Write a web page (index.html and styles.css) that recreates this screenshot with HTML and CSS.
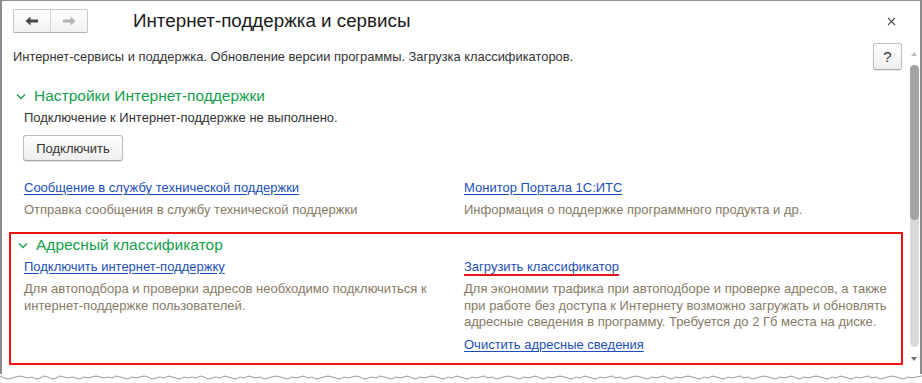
FILE: index.html
```html
<!DOCTYPE html>
<html lang="ru">
<head>
<meta charset="utf-8">
<title>Интернет-поддержка и сервисы</title>
<link rel="stylesheet" href="styles.css">
</head>
<body>
<div class="window">
  <div class="header">
    <div class="nav">
      <button class="nav-btn back" aria-label="Назад">
        <svg width="14" height="10" viewBox="0 0 14 10"><path d="M0.5 5 L5.5 0.5 L5.5 3.5 L13 3.5 L13 6.5 L5.5 6.5 L5.5 9.5 Z" fill="#4a4a4a"/></svg>
      </button>
      <button class="nav-btn fwd" aria-label="Вперёд">
        <svg width="14" height="10" viewBox="0 0 14 10"><path d="M13.5 5 L8.5 0.5 L8.5 3.5 L1 3.5 L1 6.5 L8.5 6.5 L8.5 9.5 Z" fill="#b4b4b4"/></svg>
      </button>
    </div>
    <h1 class="title">Интернет-поддержка и сервисы</h1>
    <button class="close" aria-label="Закрыть">
      <svg width="9" height="9" viewBox="0 0 9 9"><path d="M1 1 L8 8 M8 1 L1 8" stroke="#505050" stroke-width="1.1"/></svg>
    </button>
  </div>
  <div class="body">
    <div class="main">
      <div class="desc-row">
        <p class="intro">Интернет-сервисы и поддержка. Обновление версии программы. Загрузка классификаторов.</p>
        <button class="help">?</button>
      </div>

      <section class="group">
        <div class="group-title">
          <svg class="chev" width="10" height="7" viewBox="0 0 10 7"><path d="M1 1.5 L5 5.5 L9 1.5" fill="none" stroke="#13a04d" stroke-width="1.3"/></svg>
          <span>Настройки Интернет-поддержки</span>
        </div>
        <div class="group-body">
          <p class="text">Подключение к Интернет-поддержке не выполнено.</p>
          <button class="btn">Подключить</button>
          <div class="cols first-cols">
            <div class="col">
              <a class="link" href="#">Сообщение в службу технической поддержки</a>
              <p class="note">Отправка сообщения в службу технической поддержки</p>
            </div>
            <div class="col">
              <a class="link" href="#">Монитор Портала 1С:ИТС</a>
              <p class="note">Информация о поддержке программного продукта и др.</p>
            </div>
          </div>
        </div>
      </section>

      <section class="group boxed">
        <div class="group-title">
          <svg class="chev" width="10" height="7" viewBox="0 0 10 7"><path d="M1 1.5 L5 5.5 L9 1.5" fill="none" stroke="#13a04d" stroke-width="1.3"/></svg>
          <span>Адресный классификатор</span>
        </div>
        <div class="group-body">
          <div class="cols">
            <div class="col">
              <a class="link" href="#">Подключить интернет-поддержку</a>
              <p class="note multi">Для автоподбора и проверки адресов необходимо подключиться к интернет-поддержке пользователей.</p>
            </div>
            <div class="col">
              <a class="link marked" href="#">Загрузить классификатор</a>
              <p class="note multi">Для экономии трафика при автоподборе и проверке адресов, а также при работе без доступа к Интернету возможно загружать и обновлять адресные сведения в программу. Требуется до 2 Гб места на диске.</p>
              <a class="link last" href="#">Очистить адресные сведения</a>
            </div>
          </div>
        </div>
      </section>
    </div>
    <div class="scroll">
      <div class="arrow up"></div>
      <div class="track"><div class="thumb"></div></div>
      <div class="arrow down"></div>
    </div>
  </div>
</div>
<svg class="torn" width="922" height="10" viewBox="0 0 922 10"><polyline fill="none" stroke="#9a9a9a" stroke-width="1" points="0,3 4,5 8,6 12,5 16,4 20,3 24,4 28,5 32,4 36,6 40,5 44,3 48,4 52,6 56,5 60,3 64,4 68,5 72,4 76,5 80,6 84,4 88,5 92,4 96,3 100,4 104,5 108,4 112,5 116,3 120,4 124,5 128,6 132,4 136,5 140,4 144,3 148,4 152,6 156,5 160,4 164,5 168,3 172,4 176,5 180,6 184,4 188,5 192,4 196,5 200,3 204,4 208,6 212,5 216,4 220,5 224,3 228,4 232,5 236,6 240,4 244,5 248,3 252,4 256,5 260,4 264,6 268,5 272,4 276,3 280,4 284,5 288,6 292,4 296,5 300,4 304,3 308,5 312,4 316,6 320,5 324,4 328,3 332,4 336,5 340,6 344,4 348,5 352,4 356,3 360,4 364,6 368,5 372,4 376,5 380,3 384,4 388,5 392,6 396,4 400,5 404,4 408,3 412,5 416,6 420,4 424,5 428,4 432,3 436,4 440,5 444,6 448,4 452,5 456,3 460,4 464,5 468,6 472,4 476,5 480,4 484,3 488,5 492,4 496,6 500,5 504,4 508,3 512,4 516,5 520,6 524,4 528,5 532,4 536,3 540,5 544,6 548,4 552,5 556,4 560,3 564,4 568,5 572,6 576,4 580,5 584,3 588,4 592,5 596,6 600,4 604,5 608,4 612,3 616,5 620,4 624,6 628,5 632,4 636,3 640,4 644,5 648,6 652,4 656,5 660,4 664,3 668,5 672,6 676,4 680,5 684,4 688,3 692,4 696,5 700,6 704,4 708,5 712,3 716,4 720,5 724,6 728,4 732,5 736,4 740,3 744,5 748,4 752,6 756,5 760,4 764,3 768,4 772,5 776,6 780,4 784,5 788,4 792,3 796,5 800,6 804,4 808,5 812,4 816,3 820,4 824,5 828,6 832,4 836,5 840,3 844,4 848,5 852,6 856,4 860,5 864,4 868,3 872,5 876,4 880,6 884,5 888,4 892,3 896,4 900,5 904,6 908,4 912,5 916,4 922,3"/></svg>
</body>
</html>
```

FILE: styles.css
```css
* { box-sizing: border-box; }
html, body { margin: 0; padding: 0; background: #fff; }
body {
  font-family: Arial, "Liberation Sans", sans-serif;
  font-size: 13px;
  color: #333;
  width: 922px;
  height: 383px;
  overflow: hidden;
}
p { margin: 0; }
button { font-family: inherit; cursor: pointer; }

.window {
  width: 922px;
  height: 374px;
  border-top: 1px solid #8c8c8c;
  border-left: 2px solid #8c8c8c;
  border-right: 2px solid #8c8c8c;
  display: flex;
  flex-direction: column;
}

.header {
  height: 40px;
  display: flex;
  align-items: center;
  padding: 0 0 0 11px;
}
.nav {
  display: flex;
  height: 24px;
  border: 1px solid #c9c9c9;
  border-bottom-color: #b0b0b0;
  border-radius: 2px;
  background: linear-gradient(#ffffff, #f1f1f1);
}
.nav-btn {
  width: 36px;
  height: 22px;
  border: 0;
  padding: 0;
  background: transparent;
  display: flex;
  align-items: center;
  justify-content: center;
}
.nav-btn.back { border-right: 1px solid #d6d6d6; width: 37px; }
.title {
  margin: 0 0 0 45px;
  font-size: 18.8px;
  font-weight: normal;
  color: #1a1a1a;
  flex: 1;
}
.close {
  width: 20px;
  height: 20px;
  border: 0;
  background: transparent;
  padding: 0;
  margin-right: 19px;
  display: flex;
  align-items: center;
  justify-content: center;
}

.body {
  flex: 1;
  display: flex;
  margin-top: 2px;
}
.main {
  flex: 1;
  padding: 0 2px 0 11px;
}
.desc-row {
  display: flex;
  align-items: center;
  justify-content: space-between;
  height: 27px;
}
.intro { color: #333; font-size: 12.9px; }
.help {
  width: 29px;
  height: 27px;
  border: 1px solid #bdbdbd;
  border-bottom-color: #a8a8a8;
  border-radius: 3px;
  background: linear-gradient(#ffffff, #efefef);
  font-size: 15px;
  color: #333;
  padding: 0;
  margin-right: 1px;
  box-shadow: 0 1px 1px rgba(0,0,0,0.08);
}

.group { margin-top: 16px; }
.group-title {
  display: flex;
  align-items: center;
  height: 20px;
  padding-left: 3px;
  color: #13a04d;
  font-size: 15.5px;
}
.chev { margin-right: 8px; margin-top: 1px; }
.group-body { padding-left: 11px; }
.text { line-height: 16px; margin-top: 4px; }
.btn {
  display: block;
  margin: 9px 0 0 -1px;
  width: 100px;
  height: 26px;
  border: 1px solid #bcbcbc;
  border-bottom-color: #a6a6a6;
  border-radius: 3px;
  background: linear-gradient(#ffffff, #eeeeee);
  font-size: 13px;
  color: #333;
  box-shadow: 0 1px 1px rgba(0,0,0,0.1);
}
.cols {
  display: grid;
  grid-template-columns: 440px 1fr;
}
.first-cols { margin-top: 19px; }
.col { display: flex; flex-direction: column; align-items: flex-start; }
.link {
  color: #1d4fb8;
  text-decoration: underline;
  text-underline-offset: 2px;
  line-height: 16px;
}
.link.marked {
  text-decoration-color: #e8141b;
  text-decoration-thickness: 2px;
  text-underline-offset: 3px;
}
.link.last { margin-top: 6px; }
.note { color: #877a65; line-height: 16px; margin-top: 6px; }
.note.multi { line-height: 16.7px; max-width: 430px; }

.boxed {
  margin: 14px 0 0 -4px;
  border: 2px solid #ee1111;
  padding: 1px 0 10px 2px;
}
.boxed .group-title { padding-left: 5px; }
.boxed .group-body { padding-left: 11px; padding-top: 4px; }

.scroll {
  width: 15px;
  display: flex;
  flex-direction: column;
  align-items: center;
  padding-top: 9px;
  padding-left: 3px;
}
.arrow {
  width: 0; height: 0;
  border-left: 3.5px solid transparent;
  border-right: 3.5px solid transparent;
}
.arrow.up { border-bottom: 4px solid #bdbdbd; }
.arrow.down { border-top: 4px solid #6e6e6e; margin-top: 10px; }
.track {
  margin-top: 9px;
  width: 9px;
  height: 282px;
  border-radius: 5px;
  background: #d9d9d9;
}
.thumb {
  height: 155px;
  border-radius: 5px;
  background: #a3a3a3;
}
.torn { display: block; margin-top: -1px; }
```
